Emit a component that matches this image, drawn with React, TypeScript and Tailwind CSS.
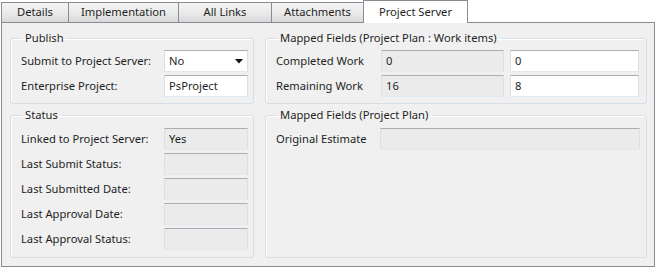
import React from 'react';

/**
 * Work item form — "Project Server" tab
 */

const tabs = [
  { label: 'Details', w: 'w-[67px]' },
  { label: 'Implementation', w: 'w-[110px]' },
  { label: 'All Links', w: 'w-[93px]' },
  { label: 'Attachments', w: 'w-[92px]' },
];

function Box({ value = '', white = false, className = '' }: { value?: string; white?: boolean; className?: string }) {
  return (
    <div
      className={`h-[22px] flex items-center pl-[4px] border border-t-[#abadb3] border-x-[#dbdfe6] border-b-[#e3e9ef] ${
        white ? 'bg-white' : 'bg-[#ebebeb]'
      } ${className}`}
    >
      {value}
    </div>
  );
}

function Group({ title, top, children }: { title: string; top: string; children: React.ReactNode }) {
  return (
    <fieldset className="border border-[#d5dfe5] rounded-[3px] shadow-[inset_1px_1px_0_#ffffff] min-w-0">
      <legend className="ml-[10px] px-[4px] leading-[16px]">{title}</legend>
      <div className={`flex flex-col gap-[3px] pl-[10px] ${top}`}>{children}</div>
    </fieldset>
  );
}

export default function App() {
  const statusRows = [
    ['Linked to Project Server:', 'Yes'],
    ['Last Submit Status:', ''],
    ['Last Submitted Date:', ''],
    ['Last Approval Date:', ''],
    ['Last Approval Status:', ''],
  ];

  return (
    <div className="w-[655px] h-[268px] bg-white pl-[1px] font-['Noto_Sans','Open_Sans',sans-serif] text-[11.2px] text-[#1e1e1e] flex flex-col">
      {/* Tab strip */}
      <div className="flex items-start h-[22px]">
        {tabs.map((t) => (
          <div
            key={t.label}
            className={`${t.w} mt-[2px] h-[20px] flex items-center justify-center border-t border-l border-[#898c95] bg-gradient-to-b from-[#f3f3f3] via-[#ebebeb] to-[#d9d9d9]`}
          >
            {t.label}
          </div>
        ))}
        <div className="w-[105px] h-[23px] relative z-10 flex items-center justify-center border-t border-x border-[#898c95] bg-white">
          Project Server
        </div>
      </div>

      {/* Panel */}
      <div className="w-[654px] h-[245px] border border-[#898c95] bg-[#f0f0f0] pl-[8px] pt-[7px]">
        <div className="grid grid-cols-[244px_382px] grid-rows-[74px_151px] gap-x-[11px] gap-y-[3px]">
          <Group title="Publish" top="pt-[4px]">
            <div className="flex items-center">
              <span className="w-[143px]">Submit to Project Server:</span>
              <div className="w-[84px] h-[22px] flex items-center justify-between pl-[4px] pr-[4px] bg-white border border-t-[#abadb3] border-x-[#dbdfe6] border-b-[#e3e9ef]">
                <span>No</span>
                <svg width="8" height="5" viewBox="0 0 8 5">
                  <path d="M0 0H8L4 4.5Z" fill="#111" />
                </svg>
              </div>
            </div>
            <div className="flex items-center">
              <span className="w-[143px]">Enterprise Project:</span>
              <Box value="PsProject" white className="w-[84px]" />
            </div>
          </Group>

          <Group title="Mapped Fields (Project Plan : Work items)" top="pt-[4px]">
            <div className="flex items-center">
              <span className="w-[105px]">Completed Work</span>
              <Box value="0" className="w-[123px]" />
              <Box value="0" white className="w-[129px] ml-[6px]" />
            </div>
            <div className="flex items-center">
              <span className="w-[105px]">Remaining Work</span>
              <Box value="16" className="w-[123px]" />
              <Box value="8" white className="w-[129px] ml-[6px]" />
            </div>
          </Group>

          <Group title="Status" top="pt-[5px]">
            {statusRows.map(([label, value]) => (
              <div key={label} className="flex items-center">
                <span className="w-[143px]">{label}</span>
                <Box value={value} className="w-[84px]" />
              </div>
            ))}
          </Group>

          <Group title="Mapped Fields (Project Plan)" top="pt-[5px]">
            <div className="flex items-center">
              <span className="w-[104px]">Original Estimate</span>
              <Box className="w-[260px]" />
            </div>
          </Group>
        </div>
      </div>
    </div>
  );
}
